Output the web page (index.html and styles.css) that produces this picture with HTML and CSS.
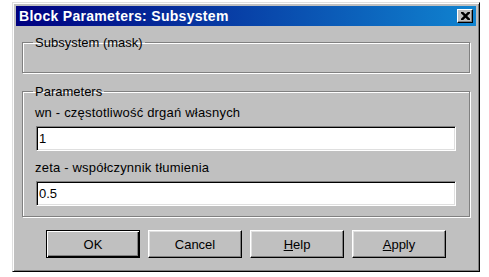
FILE: index.html
```html
<!DOCTYPE html>
<html lang="pl">
<head>
  <meta charset="UTF-8" />
  <title>Block Parameters: Subsystem</title>
  <link rel="stylesheet" href="styles.css">
</head>
<body>
  <div class="window">
    <div class="titlebar">
      <span class="title">Block Parameters: Subsystem</span>
      <button class="close" type="button">
        <svg width="9" height="8" viewBox="0 0 8 7"><path d="M0 0h2l2 2 2-2h2v1l-2.5 2.5 2.5 2.5v1h-2l-2-2-2 2h-2v-1l2.5-2.5-2.5-2.5z" fill="#000"/></svg>
      </button>
    </div>

    <fieldset class="group mask">
      <legend>Subsystem (mask)</legend>
      <div class="empty"></div>
    </fieldset>

    <fieldset class="group params">
      <legend>Parameters</legend>
      <label for="wn">wn - częstotliwość drgań własnych</label>
      <input type="text" id="wn" value="1" />
      <label for="zeta">zeta - współczynnik tłumienia</label>
      <input type="text" id="zeta" value="0.5" />
    </fieldset>

    <div class="buttons">
      <button class="btn default" type="button">OK</button>
      <button class="btn" type="button">Cancel</button>
      <button class="btn" type="button"><u>H</u>elp</button>
      <button class="btn" type="button"><u>A</u>pply</button>
    </div>
  </div>
</body>
</html>
```

FILE: styles.css
```css
body {
  margin: 2px 0 0 12px;
  background: #fff;
  font-family: "Liberation Sans", Arial, sans-serif;
  font-size: 13px;
  color: #000;
}

.window {
  width: 468px;
  height: 270px;
  box-sizing: border-box;
  background: #c0c0c0;
  border: 1px solid;
  border-color: #dfdfdf #000 #000 #dfdfdf;
  box-shadow: inset 1px 1px #fff, inset -1px -1px #808080;
  padding: 3px;
}

.titlebar {
  height: 20px;
  display: flex;
  align-items: center;
  justify-content: space-between;
  padding: 0 3px 0 3px;
  background: linear-gradient(to right, #000080, #1084d0);
  color: #fff;
}

.title {
  font-weight: bold;
  font-size: 14px;
  letter-spacing: 0.3px;
}

.close {
  width: 16px;
  height: 14px;
  padding: 0;
  display: flex;
  align-items: center;
  justify-content: center;
  background: #c0c0c0;
  border: 1px solid;
  border-color: #fff #000 #000 #fff;
  box-shadow: inset -1px -1px #808080;
}

.group {
  margin: 0 6px;
  padding: 0 13px;
  border: 1px solid #808080;
  box-shadow: 1px 1px #fff, inset 1px 1px #fff;
}

.group legend {
  padding: 0 2px;
  margin-left: -3px;
  line-height: 15px;
}

.mask {
  margin-top: 9px;
}

.mask .empty {
  height: 22px;
}

.params {
  margin-top: 11px;
  padding-bottom: 10px;
}

.params label {
  display: block;
  line-height: 15px;
  margin-top: 9px;
  margin-left: -1px;
  letter-spacing: 0.2px;
}

.params legend + label {
  margin-top: 6px;
}

.params label + input {
  margin-top: 6px;
}

.params input {
  display: block;
  width: 100%;
  height: 25px;
  box-sizing: border-box;
  font-family: inherit;
  font-size: 13px;
  padding: 0 2px;
  background: #fff;
  border: 1px solid;
  border-color: #808080 #fff #fff #808080;
  box-shadow: inset 1px 1px #000, inset -1px -1px #dfdfdf;
  outline: none;
}

.buttons {
  display: flex;
  justify-content: center;
  gap: 8px;
  margin-top: 13px;
}

.btn {
  width: 94px;
  height: 28px;
  font-family: inherit;
  font-size: 13px;
  background: #c0c0c0;
  border: 1px solid;
  border-color: #fff #000 #000 #fff;
  box-shadow: inset -1px -1px #808080, inset 1px 1px #dfdfdf;
  padding: 0;
}

.btn.default {
  border-color: #000;
  box-shadow: inset 1px 1px #fff, inset -1px -1px #000, inset -2px -2px #808080;
}
```
